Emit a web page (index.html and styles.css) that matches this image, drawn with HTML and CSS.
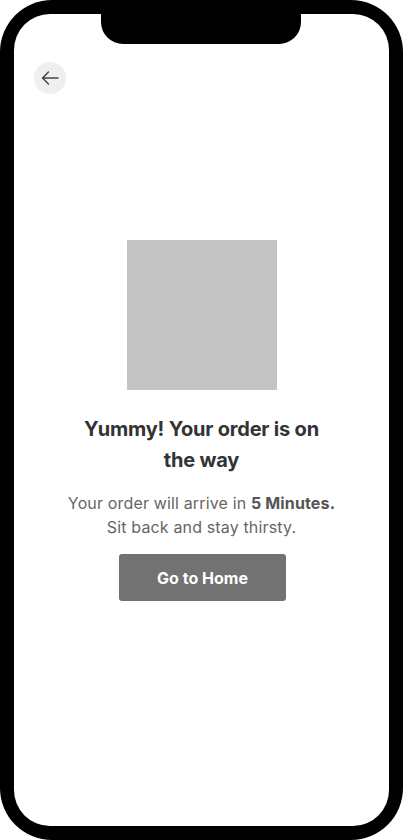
FILE: index.html
```html
<!DOCTYPE html>
<html lang="en">
<head>
<meta charset="utf-8">
<title>Order on the way</title>
<link rel="stylesheet" href="styles.css">
</head>
<body>
<div class="phone">
  <div class="screen">
    <div class="notch"></div>
    <button class="back" aria-label="Back">
      <svg width="18" height="14" viewBox="0 0 18 14" fill="none" stroke="#444" stroke-width="1.4" stroke-linecap="round" stroke-linejoin="round">
        <path d="M17 7H1.5M7.5 1L1.5 7l6 6"/>
      </svg>
    </button>
    <div class="content">
      <div class="placeholder"></div>
      <h1 class="title">Yummy! Your order is on<br>the way</h1>
      <p class="text">Your order will arrive in <strong>5 Minutes.</strong><br>Sit back and stay thirsty.</p>
      <button class="cta">Go to Home</button>
    </div>
  </div>
</div>
</body>
</html>
```
FILE: styles.css
```css
* { box-sizing: border-box; }
html, body { margin: 0; padding: 0; background: #fff; }
body { font-family: "Inter", "Liberation Sans", sans-serif; }
.phone {
  width: 403px;
  height: 840px;
  background: #000;
  border-radius: 52px;
  padding: 14px;
}
.screen {
  position: relative;
  height: 812px;
  background: #fff;
  border-radius: 36px;
  overflow: hidden;
  display: flex;
  flex-direction: column;
}
.notch {
  position: absolute;
  top: -1px;
  left: 87px;
  width: 200px;
  height: 31px;
  background: #000;
  border-radius: 0 0 22px 22px;
}
.back {
  margin: 48px 0 0 20px;
  width: 32px;
  height: 32px;
  border-radius: 50%;
  border: none;
  background: #efefef;
  padding: 0;
  display: flex;
  align-items: center;
  justify-content: center;
}
.content {
  display: flex;
  flex-direction: column;
  align-items: center;
  margin-top: 146px;
}
.placeholder {
  width: 150px;
  height: 150px;
  background: #c4c4c4;
  margin-left: 1px;
}
.title {
  margin: 24px 0 0;
  font-size: 20px;
  line-height: 31px;
  font-weight: 700;
  color: #333;
  text-align: center;
  letter-spacing: -0.2px;
}
.text {
  margin: 15px 0 0;
  font-size: 16px;
  line-height: 24px;
  color: #666;
  text-align: center;
  letter-spacing: 0.15px;
}
.text strong { color: #555; font-weight: 700; }
.cta {
  margin-top: 15px;
  width: 167px;
  height: 47px;
  border: none;
  border-radius: 3px;
  background: #727272;
  color: #fff;
  font-family: inherit;
  font-size: 16px;
  font-weight: 700;
  margin-left: 2px;
}
```
